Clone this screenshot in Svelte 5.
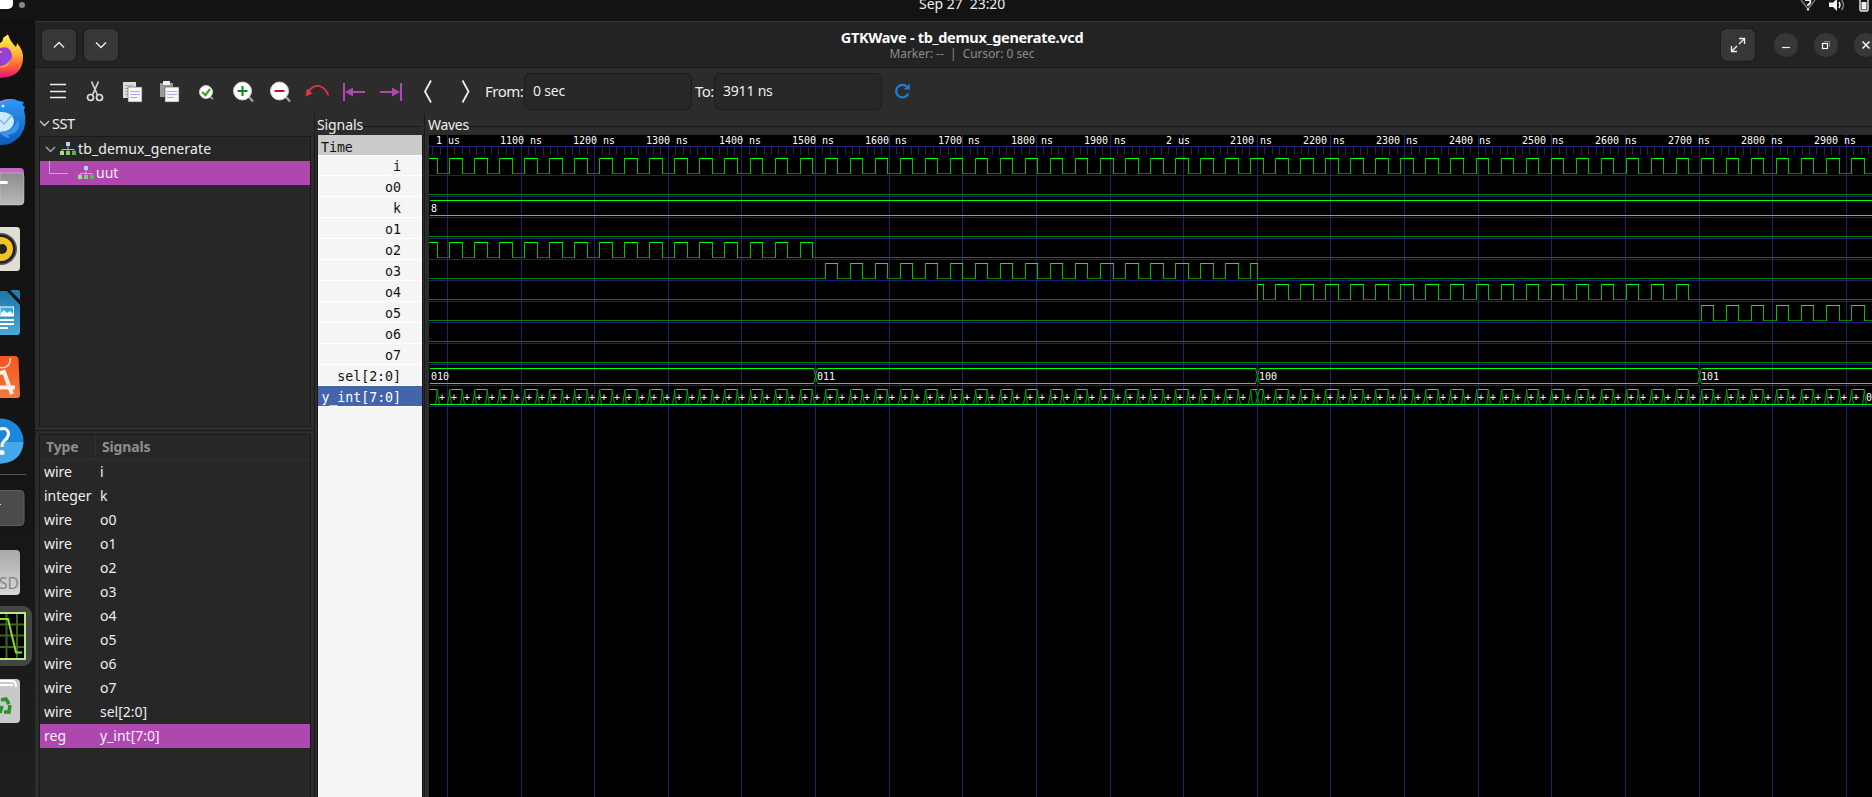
<script>
  const W = 1443, H = 662, X0 = 429, Y0 = 135;
  const px = (t) => Math.floor(447.4 + (t - 1000) * 0.7363) - X0 + 0.5;
  const names = ['i', 'o0', 'k', 'o1', 'o2', 'o3', 'o4', 'o5', 'o6', 'o7', 'sel[2:0]', 'y_int[7:0]'];
  const hi = (r) => 158 + 21 * r - Y0 + 0.5;
  const lo = (r) => 173 + 21 * r - Y0 + 0.5;

  const majors = Array.from({ length: 20 }, (_, n) => ({
    x: px(1000 + n * 100),
    label: n === 0 ? '1 us' : n === 10 ? '2 us' : `${1000 + n * 100} ns`,
    lx: n % 10 === 0 ? 7 + n * 73 : 71 + (n - 1) * 73
  }));
  const minors = Array.from({ length: 198 }, (_, n) => px(970 + n * 10)).filter((x) => x > 0 && x < W);
  const seps = names.map((_, r) => 175 + 21 * r - Y0 + 0.5);

  // The clock toggles every 17 ns; it is high from 17k to 17(k+1) when k is odd.
  function clock(from, to) {
    const out = [];
    for (let k = 57; k < 180; k += 2) {
      const a = Math.max(17 * k, from), b = Math.min(17 * (k + 1), to);
      if (a < b) out.push([a <= 971 ? 0 : px(a), Math.min(px(b), W + 5)]);
    }
    return out;
  }
  function wave(r, from, to) {
    let high = '', low = '', edge = '', x = 0;
    for (const [a, b] of clock(from, to)) {
      low += `M${x} ${lo(r)}H${a}`;
      high += `M${a} ${hi(r)}H${b}`;
      if (a > 0) edge += `M${a} ${hi(r) - 0.5}V${lo(r) + 0.5}`;
      edge += `M${b} ${hi(r) - 0.5}V${lo(r) + 0.5}`;
      x = b;
    }
    low += `M${x} ${lo(r)}H${W}`;
    return { high, low, edge };
  }
  const waves = [
    wave(0, 900, 3100), wave(1, 0, 0), wave(3, 0, 0), wave(4, 900, 1500), wave(5, 1500, 2100),
    wave(6, 2100, 2700), wave(7, 2700, 3100), wave(8, 0, 0), wave(9, 0, 0)
  ];

  const selCuts = [1500, 2100, 2700].map(px);
  let selLine = '', start = 1;
  for (const c of [...selCuts, W + 2]) {
    selLine += `M${start} ${hi(10)}H${c - 2}M${start} ${lo(10)}H${c - 2}`;
    start = c + 2;
  }
  const selX = selCuts.map((c) => `M${c - 2} ${hi(10)}L${c + 2} ${lo(10)}M${c + 2} ${hi(10)}L${c - 2} ${lo(10)}`).join('');

  const busHigh = [...clock(900, 2100), ...clock(2100, 3100)];
  const cut = px(2100);
  let busLine = `M1 ${lo(11)}H${W}`, busEdge = '';
  const plus = [];
  for (const [a, b] of busHigh) {
    const l = Math.max(a, 0) + (a > 0 ? 1.5 : 1), rr = b - 1;
    busLine += `M${l} ${hi(11)}H${rr}`;
    if (a > 0 && a !== cut) {
      busEdge += `M${a - 2} ${lo(11)}L${a + 0.5} ${hi(11)}M${a} ${hi(11)}L${a + 2} ${lo(11)}`;
      if (b - a > 8 ) plus.push(a + 2);
    }
    if (b !== cut) {
      busEdge += `M${b - 2} ${lo(11)}L${b} ${hi(11)}M${b - 0.5} ${hi(11)}L${b + 2} ${lo(11)}`;
      if (b < 1430) plus.push(b + 2);
    }
  }
  busEdge += `M${cut - 2} ${hi(11)}L${cut + 2} ${lo(11)}M${cut + 2} ${hi(11)}L${cut - 2} ${lo(11)}`;

  const vars = [['wire', 'i'], ['integer', 'k'], ...[0, 1, 2, 3, 4, 5, 6, 7].map((n) => ['wire', 'o' + n]), ['wire', 'sel[2:0]'], ['reg', 'y_int[7:0]']];
</script>

{#snippet tree()}
  <svg class="hier" width="16" height="14" viewBox="0 0 16 14">
    <path d="M8 4v3M2 9.500V7.500H14V9.500M8 7v3" fill="none" stroke="#b4b8b0" />
    <rect x="6" width="4" height="4" fill="#b5d3f2" />
    <rect y="9" width="4" height="4" fill="#a5dc98" /><rect x="6" y="9" width="4" height="4" fill="#83cc74" /><rect x="12" y="9" width="4" height="4" fill="#5cb64f" />
  </svg>
{/snippet}

<div class="screen">
  <div class="topbar">
    <span class="pill"></span><span class="dot"></span>
    <span class="clock">Sep 27&nbsp; 23:20</span>
    <svg class="tray" width="80" height="21" viewBox="0 0 80 21">
      <path d="M10 0L17 9L24 0" fill="none" stroke="#777" stroke-width="1.500" />
      <path d="M14 0h5q1.500 3-2 5v1" fill="none" stroke="#eee" stroke-width="1.800" /><rect x="16" y="8.500" width="2" height="2" fill="#eee" />
      <path d="M38 2.500h4l4-3.500v12l-4-4h-4z" fill="#f2f2f2" /><path d="M48 2q2 3 0 6" stroke="#eee" stroke-width="1.500" fill="none" /><path d="M50.500 0q4 5 0 10" stroke="#888" stroke-width="1.300" fill="none" />
      <rect x="69" y="-4" width="8" height="15" rx="1.500" fill="none" stroke="#eee" stroke-width="1.400" /><rect x="70.500" y="2" width="5" height="7.500" fill="#eee" />
    </svg>
  </div>

  <div class="body">
    <div class="dock">
      <svg viewBox="0 0 35 64">
        <defs>
          <linearGradient id="fx" x1="0" y1="0" x2="0" y2="1"><stop offset="0" stop-color="#fff04a" /><stop offset=".4" stop-color="#ffbd3a" /><stop offset=".7" stop-color="#ff6a3a" /><stop offset="1" stop-color="#e60f78" /></linearGradient>
          <linearGradient id="tb" x1="0" y1="0" x2="0" y2="1"><stop offset="0" stop-color="#2d9bf5" /><stop offset="1" stop-color="#1158b8" /></linearGradient>
          <linearGradient id="gr" x1="0" y1="0" x2="0" y2="1"><stop offset="0" stop-color="#8d8d8d" /><stop offset="1" stop-color="#b9b9b9" /></linearGradient>
          <linearGradient id="gl" x1="0" y1="0" x2="0" y2="1"><stop offset="0" stop-color="#a9a9a9" /><stop offset="1" stop-color="#d8d8d8" /></linearGradient>
          <linearGradient id="wr" x1="0" y1="0" x2="0" y2="1"><stop offset="0" stop-color="#1b75a8" /><stop offset="1" stop-color="#4aaad6" /></linearGradient>
          <linearGradient id="or" x1="0" y1="0" x2="0" y2="1"><stop offset="0" stop-color="#f5561e" /><stop offset="1" stop-color="#f6793c" /></linearGradient>
          <radialGradient id="pu"><stop offset="0" stop-color="#7b4be8" /><stop offset="1" stop-color="#a03bd0" /></radialGradient>
        </defs>
        <path d="M0 18Q3 17 3 13Q5 11 8 9.500Q10 16 14 20L16 22Q17 20 17 18Q24 26 23 34Q22 52 0 53z" fill="url(#fx)" />
        <path d="M0 23Q11 20 12 31Q12 40 0 42z" fill="url(#pu)" /><path d="M0 28L3 27 0 26z" fill="#ffb52d" /><path d="M11 33Q10 43 0 43V41Q8 40 11 33z" fill="#ff9640" />
      </svg>
      <svg viewBox="0 0 35 64">
        <path d="M0 12Q10 8 19 12L24 13 22.500 16 25 18 24 21Q28 35 21 46 12 57 0 56z" fill="url(#tb)" /><path d="M0 13Q8 8 17 11Q8 10 0 15z" fill="#a57ad8" />
        <path d="M0 23Q11 22 14 31 14 42 0 43z" fill="#cde9fb" /><path d="M0 31L4 35 12 26" fill="none" stroke="#7ab9eb" stroke-width="1.500" />
        <path d="M0 43Q15 42 18 30Q22 44 8 46L10 49Q5 49 0 44z" fill="#3c94e6" /><circle cx="3" cy="17" r="1.500" fill="#cfeaff" />
      </svg>
      <svg viewBox="0 0 35 64"><path d="M0 15H20Q24 15 24 19V28H0z" fill="#c06cbc" /><path d="M0 20H20Q24 20 24 24V48Q24 52 20 52H0z" fill="url(#gr)" stroke="#ccc" stroke-width=".5" /><rect x="-3" y="28" width="11" height="3" rx="1.500" fill="#fff" /></svg>
      <svg viewBox="0 0 35 64"><rect x="-20" y="10" width="40" height="44" rx="3.500" fill="#e2ded4" /><circle cx="1" cy="32" r="16" fill="#55565c" /><circle cx="1" cy="32" r="14.500" fill="#20222b" /><circle cx="1" cy="32" r="12" fill="#f3c322" /><circle cx="2" cy="32" r="5" fill="#242424" /></svg>
      <svg viewBox="0 0 35 64"><path d="M0 10H7L20 24V51Q20 54 17 54H0z" fill="url(#wr)" /><path d="M10 9H18Q20 9 20 11V19z" fill="#257cab" /><rect x="0" y="26" width="13.500" height="9" fill="#37a8e2" stroke="#fff" /><path d="M1 35V32L4 29 7 32 10 30 13 33V35z" fill="#fff" /><path d="M0 39H14M0 43H14M0 47H8" stroke="#fff" stroke-width="2" /></svg>
      <svg viewBox="0 0 35 64"><path d="M0 11H15Q18 11 18.500 14L20 50Q20 53 17 53H0z" fill="url(#or)" /><path d="M0 22.500Q10 24 10.500 13" fill="none" stroke="#ffd8c8" stroke-width="1.500" /><path d="M0 28L4 27 12 49M0 42.500H15" fill="none" stroke="#fff0e8" stroke-width="4" /></svg>
      <svg viewBox="0 0 35 64"><circle cx="1" cy="32" r="22.500" fill="#1c86dc" /><path d="M-1 33H23.500Q22 53 1 54.500H-1z" fill="#46a8e8" /><path d="M0 20Q8 18 8.500 25Q8 29 4 32Q2 34 2 38" fill="none" stroke="#fff" stroke-width="3" /><circle cx="2" cy="43.500" r="2.500" fill="#fff" /></svg>
      <div class="rule"></div>
      <svg viewBox="0 0 35 64"><rect x="-20" y="13.500" width="44" height="35" rx="4" fill="#4b4b4b" stroke="#626262" /><path d="M0 27.500H1" stroke="#ddd" /></svg>
      <svg viewBox="0 0 35 64"><rect x="-20" y="9" width="40" height="45" rx="4" fill="url(#gl)" /><text x="-1" y="48" font-size="16.500" fill="#858585" font-family="Noto Sans" textLength="20" lengthAdjust="spacingAndGlyphs">SD</text></svg>
      <svg viewBox="0 0 35 64"><rect x="-20" y="1" width="52" height="60" rx="9" fill="#454545" /><rect x="-5" y="8" width="30" height="46" fill="#000" stroke="#b3ea86" stroke-width="2" /><path d="M0 19.500H24M0 30.500H24M0 42H24M6.500 9V53M17 9V53" stroke="#40641f" stroke-width="2" /><path d="M0 14H8L16 47.500H22" fill="none" stroke="#83e22c" stroke-width="2" /></svg>
      <svg viewBox="0 0 35 64"><rect x="-20" y="10" width="40" height="44" rx="4" fill="#c9c9c9" /><path d="M0 12H13Q16 13 16 18M0 16H13" fill="none" stroke="#fff" stroke-width="2" /><path d="M1 31L6 30 9 35M10 36L9 43H4M0 44L2 37" fill="none" stroke="#2f8e2f" stroke-width="3.500" /></svg>
    </div>

    <div class="window">
      <header>
        <button class="hb" aria-label="Previous"><svg width="12" height="8" viewBox="0 0 12 8"><path d="M1 6.500L6 1.500 11 6.500" /></svg></button>
        <button class="hb" aria-label="Next"><svg width="12" height="8" viewBox="0 0 12 8"><path d="M1 1.500L6 6.500 11 1.500" /></svg></button>
        <div class="titles"><b>GTKWave - tb_demux_generate.vcd</b><small>Marker: --&nbsp; |&nbsp; Cursor: 0 sec</small></div>
        <button class="hb" aria-label="Fullscreen"><svg width="16" height="16" viewBox="0 0 16 16"><path d="M9 1.500H14.500V7M14.500 1.500L9 7M1.500 9V14.500H7M1.500 14.500L7 9" /></svg></button>
        <button class="round min" aria-label="Minimize"><svg width="10" height="10" viewBox="0 0 10 10"><path d="M1 7.500H9" stroke-width="1.200" /></svg></button>
        <button class="round" aria-label="Restore"><svg width="10" height="10" viewBox="0 0 10 10"><path d="M3 1.500H8.500V7" stroke="#888" stroke-width="1" /><rect x="1.500" y="3.500" width="5" height="5" fill="none" stroke="#fff" stroke-width="1.200" /></svg></button>
        <button class="round" aria-label="Close"><svg width="10" height="10" viewBox="0 0 10 10"><path d="M1.500 1.500L8.500 8.500M8.500 1.500L1.500 8.500" stroke-width="1.700" /></svg></button>
      </header>

      <div class="toolbar">
        <svg viewBox="0 0 24 24"><path d="M4 5.500H20M4 12.500H20M4 18.500H20" stroke="#eee" stroke-width="1.400" /></svg>
        <svg viewBox="0 0 24 24"><path d="M8.500 2.500L14.500 16M15.500 2.500L9.500 16" stroke="#ccc" stroke-width="1.800" fill="none" /><circle cx="7.500" cy="18.500" r="3" fill="none" stroke="#ddd" stroke-width="1.700" /><circle cx="16.500" cy="18.500" r="3" fill="none" stroke="#ddd" stroke-width="1.700" /></svg>
        <svg viewBox="0 0 24 24"><rect x="3" y="3" width="13" height="16" fill="#ddd" /><path d="M5 6.500H13M5 9.500H9M5 12.500H8M5 15.500H8" stroke="#aaa" /><rect x="8" y="8" width="14" height="15" fill="#f6f6f6" stroke="#555" stroke-width=".6" /><path d="M10 12.500H20M10 15.500H20M10 18.500H17" stroke="#aaaaf0" /></svg>
        <svg viewBox="0 0 24 24"><path d="M3 4H16V18H3z" fill="#999" /><path d="M6 2H13V6H6z" fill="#eee" /><rect x="8" y="8" width="14" height="15" fill="#f6f6f6" stroke="#555" stroke-width=".6" /><path d="M10 12.500H20M10 15.500H20M10 18.500H17" stroke="#aaaaf0" /></svg>
        <svg viewBox="0 0 24 24"><path d="M15 17L19 20" stroke="#aaa69c" stroke-width="1.800" /><circle cx="12" cy="13" r="6.500" fill="#fff" stroke="#cfcabc" /><path d="M8 13L11.500 16 16 10" fill="none" stroke="#43a52c" stroke-width="2.300" /></svg>
        <svg viewBox="0 0 24 24"><path d="M18 18L22 22.500" stroke="#aaa69c" stroke-width="2.200" /><circle cx="11.500" cy="12" r="9" fill="#fff" stroke="#d5d0c4" /><path d="M6.500 12H16.500M11.500 7V17" stroke="#0c8a18" stroke-width="2" /></svg>
        <svg viewBox="0 0 24 24"><path d="M18 18L22 22.500" stroke="#aaa69c" stroke-width="2.200" /><circle cx="11.500" cy="12" r="9" fill="#fff" stroke="#d5d0c4" /><path d="M6.500 12H16.500" stroke="#c8102e" stroke-width="2" /></svg>
        <svg viewBox="0 0 24 24"><path d="M3 13Q8 6 14 7T23.500 16.500" fill="none" stroke="#ee2f45" stroke-width="1.700" /><path d="M.500 17.500L2 9.500 7.500 14.500z" fill="#ee2f45" /></svg>
        <svg viewBox="0 0 24 24"><path d="M2 4V22M8 13H23" stroke="#ae48ae" stroke-width="2" /><path d="M3 13L11 8.500V17.500z" fill="#ae48ae" /></svg>
        <svg viewBox="0 0 24 24"><path d="M22 4V22M1 13H15" stroke="#ae48ae" stroke-width="2" /><path d="M21 13L13 8.500V17.500z" fill="#ae48ae" /></svg>
        <svg viewBox="0 0 24 24"><path d="M15 1.500L9 12.500 15 23.500" fill="none" stroke="#eee" stroke-width="1.800" /></svg>
        <svg viewBox="0 0 24 24"><path d="M9.500 1.500L15.500 12.500 9.500 23.500" fill="none" stroke="#eee" stroke-width="1.800" /></svg>
        <span class="lab from">From:</span><span class="entry">0 sec</span>
        <span class="lab to">To:</span><span class="entry">3911 ns</span>
        <svg class="reload" viewBox="0 0 24 24"><path d="M16.800 7.500A6.300 6.300 0 1 0 18.300 14.500" fill="none" stroke="#1c7fd6" stroke-width="2.200" /><path d="M19.800 4.500V10.500H13.500z" fill="#1c7fd6" /></svg>
      </div>

      <div class="panes">
        <div class="left">
          <div class="sst"><svg width="11" height="7" viewBox="0 0 11 7"><path d="M1 1L5.500 5.500 10 1" /></svg><span>SST</span></div>
          <div class="frame treebox">
            <div class="node"><svg class="exp" width="11" height="7" viewBox="0 0 11 7"><path d="M1 1L5.500 5.500 10 1" /></svg>{@render tree()}<span class="tb">tb_demux_generate</span></div>
            <div class="node sel"><svg width="28" height="24" viewBox="0 0 28 24"><path d="M9.500 0V12.500H28" style="stroke:#d9a0d8" /></svg><span class="pad"></span>{@render tree()}<span>uut</span></div>
          </div>
          <div class="sash"></div>
          <div class="frame varbox">
            <div class="vrow head"><span>Type</span><span>Signals</span></div>
            {#each vars as [type, name]}
              <div class="vrow" class:sel={type === 'reg'}><span>{type}</span><span>{name}</span></div>
            {/each}
          </div>
        </div>

        <div class="signals">
          <div class="legend"><span class="slab">Signals</span></div>
          <div class="siglist">
            <div class="time">Time</div>
            {#each names as name, r}
              <div class="sig" class:first={r === 0} class:picked={r === 11}>{name}</div>
            {/each}
          </div>
        </div>

        <div class="waves">
          <div class="legend"><span class="wlab">Waves</span></div>
          <svg class="canvas" width={W} height={H} viewBox="0 0 {W} {H}">
            <g stroke="#202070" fill="none" shape-rendering="crispEdges">
              {#each majors as m}<path d="M{m.x} 0V{H}" />{/each}
              {#each minors as x}<path d="M{x} 11V20" />{/each}
              <path d="M0 11.500H{W}" />
              {#each seps as y}<path d="M0 {y}H{W}" />{/each}
            </g>
            <g fill="none" shape-rendering="crispEdges">
              {#each waves as w}
                <path d={w.low} stroke="#008000" /><path d={w.edge} stroke="#00c000" /><path d={w.high} stroke="#00ff00" />
              {/each}
              <path d="M1 {hi(2)}H{W}M1 {lo(2)}H{W}{selLine}{busLine}" stroke="#00ff00" />
            </g>
            <path d={selX + busEdge} fill="none" stroke="#00a800" />
            <g class="vals">
              {#each majors as m}<text x={m.lx} y="9">{m.label}</text>{/each}
              <text x="2" y={hi(2) + 11.5}>8</text>
              <text x="2" y={hi(10) + 11.5}>010</text>
              {#each selCuts as c, n}<text x={c + 1.5} y={hi(10) + 11.5}>{['011', '100', '101'][n]}</text>{/each}
              {#each plus as x}<text x={x - 0.5} y={hi(11) + 11.5}>+</text>{/each}
              <text x={px(2924) + 1.5} y={hi(11) + 11.5}>0</text>
            </g>
          </svg>
        </div>
      </div>
    </div>
  </div>
</div>

<style>
  :global(body) { margin: 0; background: #131313; overflow: hidden; }
  .screen { width: 1872px; height: 797px; overflow: hidden; display: flex; flex-direction: column; background: #131313; color: #eee; font: 14px/24px "Noto Sans", sans-serif; }
  .topbar { height: 21px; flex: none; display: flex; align-items: flex-start; overflow: hidden; }
  .pill { width: 13px; height: 9px; background: #fff; border-radius: 0 0 5px 0; }
  .dot { width: 6px; height: 6px; border-radius: 3px; background: #888; margin: 2px 0 0 6px; }
  .clock { margin-left: 894px; margin-top: -8px; width: 90px; letter-spacing: -0.05px; white-space: nowrap; }
  .tray { margin-left: auto; margin-right: 1px; }
  .body { flex: 1; display: flex; min-height: 0; }
  .dock { width: 35px; flex: none; padding-top: 4px; background: linear-gradient(#111 0, #151515 60%, #1f1f1d); display: flex; flex-direction: column; overflow: hidden; }
  .dock > svg { width: 35px; height: 64px; flex: none; }
  .rule { flex: none; height: 1px; width: 26px; background: #555; margin: 1px 0 2px; }
  .window { flex: 1; min-width: 0; display: flex; flex-direction: column; background: #2c2c2c; }
  header { height: 45px; flex: none; border-top: 1px solid #373737; border-bottom: 1px solid #191919; background: #232323; display: flex; align-items: center; padding-left: 7px; }
  button { padding: 0; margin: 0; display: flex; align-items: center; justify-content: center; flex: none; }
  button svg { fill: none; stroke: #eee; stroke-width: 1.4; }
  .hb { width: 34px; height: 32px; margin-right: 8px; border: 0; border-radius: 6px; background: #373737; box-shadow: 0 0 0 1px #1b1b1b; }
  .round { width: 24px; height: 24px; border-radius: 12px; border: 0; background: #373737; }
  .hb + .round { margin-left: 11px; }
  .round + .round { margin-left: 16px; }
  .round:last-child { margin-right: -6px; }
  .titles { flex: 1; display: flex; flex-direction: column; align-items: center; padding-left: 77px; white-space: nowrap; }
  .titles b { font-size: 14.5px; line-height: 18px; letter-spacing: -0.3px; color: #fff; }
  .titles small { font-size: 11.9px; line-height: 15px; color: #8c8c8c; }
  .toolbar { height: 46px; flex: none; display: flex; align-items: center; padding-left: 11px; }
  .toolbar > svg { width: 24px; height: 24px; flex: none; margin-right: 13px; }
  .lab { white-space: nowrap; font-size: 15px; }
  .from { width: 38px; margin-left: -5px; letter-spacing: -0.5px; }
  .to { width: 20px; margin-left: 3px; letter-spacing: -0.5px; }
  .from + .entry { margin-left: 1px; }
  .to + .entry { margin-left: -1px; }
  .entry { box-sizing: border-box; width: 168px; height: 37px; border: 1px solid #1b1b1b; border-radius: 6px; background: #272727; padding: 5px 8px; letter-spacing: -0.2px; }
  .toolbar > .reload { margin-left: 8px; }
  .panes { flex: 1; display: flex; min-height: 0; }
  .left { width: 280px; box-sizing: border-box; flex: none; padding: 0 3px 0 4px; border-right: 1px solid #191919; display: flex; flex-direction: column; }
  .sst { height: 18px; padding-bottom: 4px; flex: none; display: flex; align-items: center; line-height: 18px; letter-spacing: -0.4px; font-size: 14.5px; }
  .sst svg, .exp { fill: none; stroke: #ccc; stroke-width: 1.3; }
  .sst span { margin-left: 2px; }
  .frame { border: 1px solid #191919; background: #272727; overflow: hidden; }
  .treebox { height: 289px; flex: none; }
  .node { height: 24px; display: flex; align-items: center; line-height: 24px; }
  .node > svg { flex: none; fill: none; stroke: #aaa; }
  .node .hier { margin-right: 2px; stroke: none; }
  .exp { margin: 1px 4px 0 5px; stroke-width: 1.3; }
  .tb { letter-spacing: 0.12px; }
  .pad { width: 10px; }
  .sel { background: #ae48ae; color: #f9ecf9; }
  .sash { height: 3px; border-bottom: 1px solid #191919; margin: 0 -3px 3px -4px; flex: none; }
  .varbox { flex: 1; border-bottom: 0; }
  .vrow { display: grid; grid-template-columns: 56px 1fr; height: 24px; padding-left: 4px; letter-spacing: 0; }
  .head { font-weight: 700; color: #8e8e8e; border-bottom: 1px solid #303030; padding-left: 6px; grid-template-columns: 49px 1fr; letter-spacing: -0.15px; }
  .head span + span { border-left: 1px solid #303030; padding-left: 6px; }
  .signals { width: 110px; box-sizing: border-box; flex: none; border-right: 1px solid #191919; padding-left: 2px; display: flex; flex-direction: column; }
  .legend { height: 21px; flex: none; display: flex; align-items: center; line-height: 21px; white-space: nowrap; }
  .legend::after { content: ""; flex: 1; height: 1px; background: #191919; margin-top: 3px; }
  .signals .legend { margin-right: 2px; }
  .slab { letter-spacing: -0.1px; } .wlab { letter-spacing: -0.3px; }
  .siglist { flex: 1; width: 104px; border-left: 1px solid #191919; border-right: 1px solid #191919; background: #f5f5f5; color: #111; font: 13.3px/20px "DejaVu Sans Mono", monospace; letter-spacing: -0.05px; }
  .time { height: 20px; background: #cbcbcb; padding-left: 3px; line-height: 26px; border-bottom: 1px solid #fff; }
  .sig { height: 20px; line-height: 23px; border-bottom: 1px solid #fff; text-align: right; padding-right: 21px; }
  .first { height: 19px; line-height: 21px; }
  .picked { background: #4464ac; color: #fff; }
  .waves { flex: 1; min-width: 0; padding-left: 3px; display: flex; flex-direction: column; }
  .canvas { display: block; flex: none; background: #000; margin-left: 1px; }
  .vals { fill: #fff; font: 10px "DejaVu Sans Mono", monospace; }
</style>
